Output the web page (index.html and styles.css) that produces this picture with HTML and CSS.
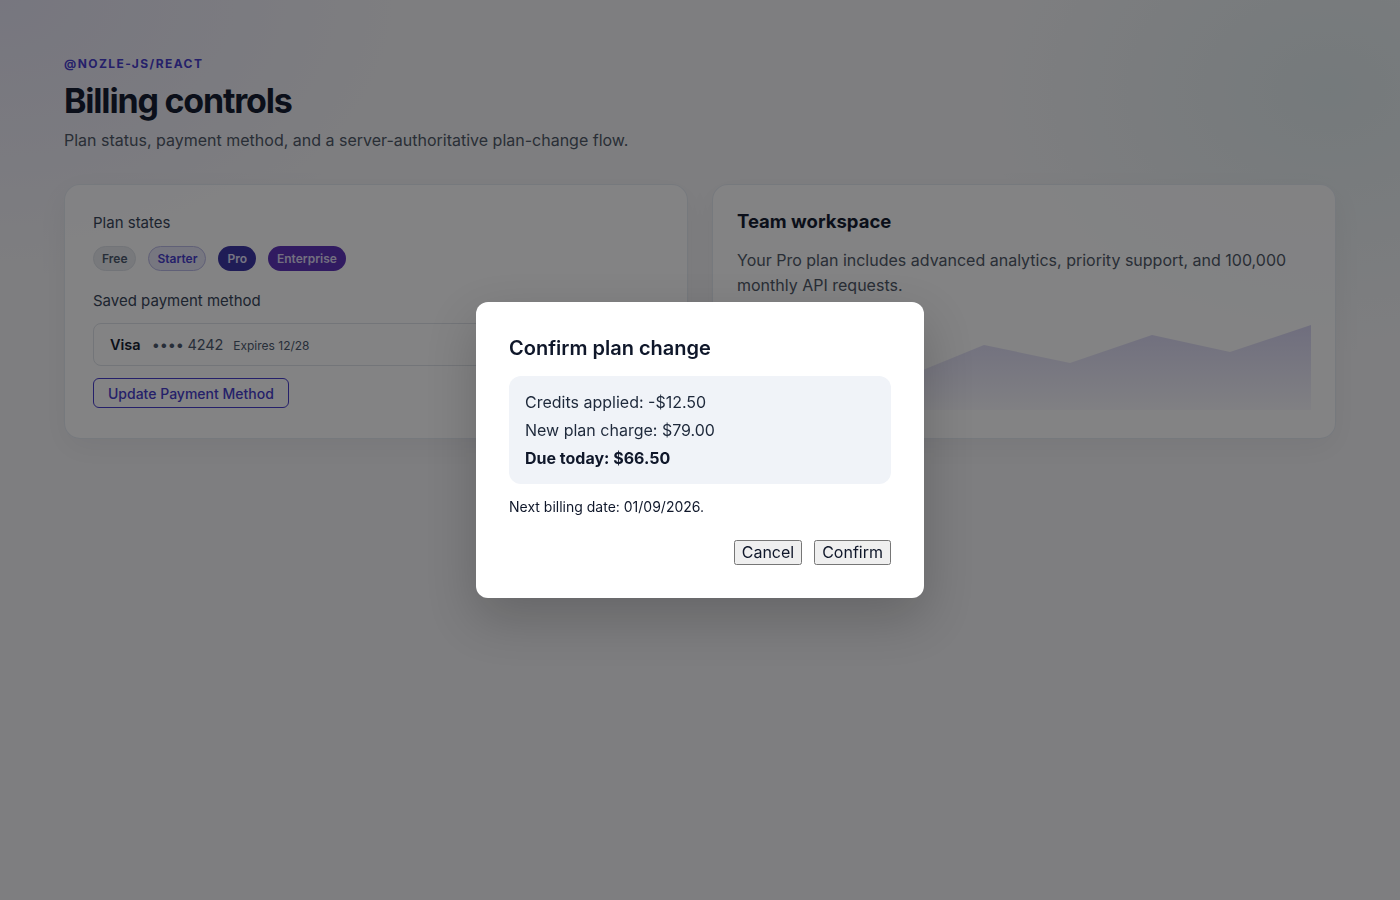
FILE: index.html
```html
<!DOCTYPE html>
<html lang="en">
<head>
<meta charset="utf-8">
<title>Billing controls</title>
<link rel="stylesheet" href="styles.css">
</head>
<body>
<main class="page">
  <header class="intro">
    <p class="eyebrow">@nozle-js/react</p>
    <h1 class="title">Billing controls</h1>
    <p class="lede">Plan status, payment method, and a server-authoritative plan-change flow.</p>
  </header>

  <section class="grid">
    <article class="card card-plan">
      <p class="label">Plan states</p>
      <div class="badges">
        <span class="badge badge-free">Free</span>
        <span class="badge badge-starter">Starter</span>
        <span class="badge badge-pro">Pro</span>
        <span class="badge badge-enterprise">Enterprise</span>
      </div>
      <p class="label">Saved payment method</p>
      <div class="payment">
        <span class="brand">Visa</span>
        <span class="digits">•••• 4242</span>
        <span class="expiry">Expires 12/28</span>
      </div>
      <div>
        <button class="outline-btn" type="button">Update Payment Method</button>
      </div>
    </article>

    <article class="card card-team">
      <h2 class="card-title">Team workspace</h2>
      <p class="card-text">Your Pro plan includes advanced analytics, priority support, and 100,000 monthly API requests.</p>
      <svg class="chart" viewBox="0 0 574 100" preserveAspectRatio="none" aria-hidden="true">
        <defs>
          <linearGradient id="areaFill" x1="0" y1="0" x2="0" y2="1">
            <stop offset="0" stop-color="#7c74d8" stop-opacity="0.3"/>
            <stop offset="1" stop-color="#7c74d8" stop-opacity="0.04"/>
          </linearGradient>
        </defs>
        <path d="M0 78 L82 60 L164 69 L247 35 L333 53 L415 25 L493 42 L574 15 L574 100 L0 100 Z" fill="url(#areaFill)"/>
      </svg>
    </article>
  </section>
</main>

<div class="backdrop">
  <div class="dialog" role="dialog" aria-labelledby="dlg-title">
    <h2 id="dlg-title" class="dialog-title">Confirm plan change</h2>
    <div class="summary">
      <p>Credits applied: -$12.50</p>
      <p>New plan charge: $79.00</p>
      <p class="total">Due today: $66.50</p>
    </div>
    <p class="note">Next billing date: 01/09/2026.</p>
    <div class="actions">
      <button type="button">Cancel</button>
      <button type="button">Confirm</button>
    </div>
  </div>
</div>
</body>
</html>
```

FILE: styles.css
```css
* { box-sizing: border-box; }

html, body { height: 100%; }

body {
  margin: 0;
  font-family: Inter, "Noto Sans", "Liberation Sans", sans-serif;
  color: #0f172a;
  background:
    radial-gradient(600px 400px at 0% 0%, rgba(139, 132, 230, 0.14), transparent 70%),
    radial-gradient(500px 380px at 95% 10%, rgba(90, 170, 170, 0.12), transparent 70%),
    #f5f5f7;
}

.page {
  padding: 56px 64px;
}

.intro { margin-bottom: 32px; }

.eyebrow {
  margin: 0;
  font-size: 12px;
  font-weight: 700;
  letter-spacing: 0.12em;
  text-transform: uppercase;
  color: #4338ca;
}

.title {
  margin: 8px 0 0;
  font-size: 34px;
  line-height: 44px;
  font-weight: 700;
  letter-spacing: -0.035em;
  color: #0f172a;
}

.lede {
  margin: 5px 0 0;
  font-size: 16px;
  line-height: 24px;
  color: #4b5563;
}

.grid {
  display: grid;
  grid-template-columns: 1fr 1fr;
  gap: 24px;
}

.card {
  background: rgba(255, 255, 255, 0.85);
  border: 1px solid rgba(226, 232, 240, 0.9);
  border-radius: 16px;
  box-shadow: 0 10px 30px rgba(15, 23, 42, 0.05);
}

.card-plan { padding: 28px 28px 30px; }
.card-team { padding: 24px; }

.label {
  margin: 0;
  font-size: 15px;
  line-height: 20px;
  color: #334155;
}

.badges {
  display: flex;
  gap: 12px;
  margin: 13px 0 20px;
}

.badge {
  display: inline-flex;
  align-items: center;
  height: 25px;
  padding: 0 8px;
  border-radius: 999px;
  font-size: 12px;
  font-weight: 600;
  border: 1px solid transparent;
}

.badge-free { background: #e8eaee; color: #475569; border-color: #dde1e7; }
.badge-starter { background: #e6e6f6; color: #4338ca; border-color: #b9b8e4; }
.badge-pro { background: #3730a3; color: #e2e0fb; }
.badge-enterprise { background: #5b2fb8; color: #ddd6f5; }

.payment {
  display: flex;
  align-items: baseline;
  gap: 10px;
  height: 43px;
  margin: 12px 0;
  padding: 12px 16px;
  border: 1px solid #dfe3e8;
  border-radius: 8px;
  background: rgba(255, 255, 255, 0.5);
}

.brand { font-size: 14.5px; font-weight: 600; color: #0f172a; margin-right: 1px; }
.digits { font-size: 14.5px; color: #475569; letter-spacing: -0.01em; }
.expiry { font-size: 12px; color: #475569; }

.outline-btn {
  font-family: inherit;
  font-size: 14px;
  font-weight: 500;
  color: #4338ca;
  background: transparent;
  border: 1px solid #4338ca;
  border-radius: 6px;
  padding: 0 14px;
  height: 30px;
}

.card-title {
  margin: 0;
  font-size: 18.5px;
  line-height: 24px;
  font-weight: 700;
  color: #0f172a;
}

.card-text {
  margin: 15px 0 0;
  font-size: 16px;
  line-height: 25px;
  color: #4b5563;
}

.chart {
  display: block;
  width: 100%;
  height: 100px;
  margin-top: 12px;
}

.backdrop {
  position: fixed;
  inset: 0;
  background: rgba(8, 8, 10, 0.5);
  display: flex;
  align-items: center;
  justify-content: center;
}

.dialog {
  width: 448px;
  background: #ffffff;
  border-radius: 12px;
  padding: 33px 33px 33px;
  box-shadow: 0 20px 50px rgba(0, 0, 0, 0.2);
}

.dialog-title {
  margin: 0 0 15px;
  font-size: 20px;
  line-height: 26px;
  font-weight: 600;
  color: #0f172a;
}

.summary {
  background: #f0f3f8;
  border-radius: 12px;
  padding: 12px 16px;
}

.summary p {
  margin: 0;
  font-size: 16px;
  line-height: 28px;
  color: #1e293b;
}

.summary .total { font-weight: 700; color: #0f172a; }

.note {
  margin: 14px 0 0;
  font-size: 14px;
  line-height: 18px;
  color: #0f172a;
}

.actions {
  display: flex;
  justify-content: flex-end;
  gap: 12px;
  margin-top: 24px;
}

.actions button {
  font-family: inherit;
  font-size: 16px;
  line-height: 19px;
  color: #0f172a;
}
```
